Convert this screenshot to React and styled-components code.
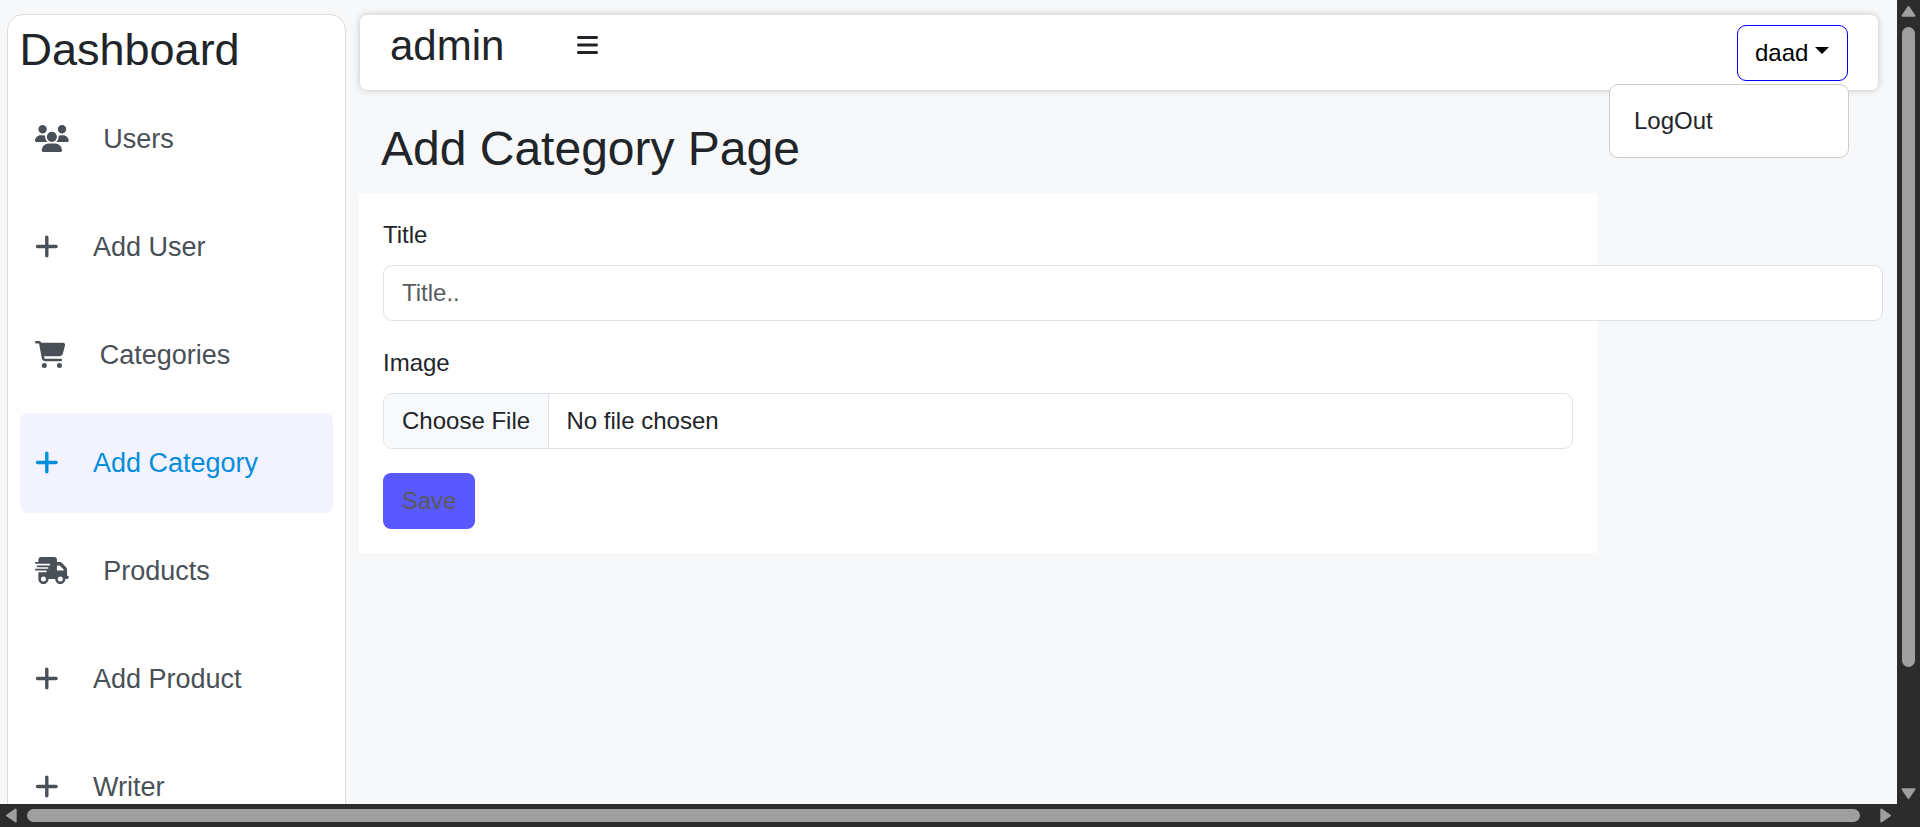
import React from "react";
import styled, { createGlobalStyle } from "styled-components";
import { FaUsers, FaPlus, FaCartShopping, FaTruckFast, FaBars } from "react-icons/fa6";

const GlobalStyle = createGlobalStyle`
  *, *::before, *::after { box-sizing: border-box; }
  body {
    margin: 0;
    overflow: hidden;
    font-family: "Liberation Sans", Arial, sans-serif;
    font-size: 24px;
    line-height: 36px;
    color: #212529;
    background: #f7f8fa;
  }
`;

const Window = styled.div`
  display: grid;
  grid-template-columns: 1897px 23px;
  grid-template-rows: 804px 23px;
  width: 1920px;
  height: 827px;
  overflow: hidden;
`;

const Viewport = styled.div`
  display: flex;
  align-items: flex-start;
  gap: 13px;
  padding: 14px 0 0 7px;
  overflow: hidden;
  background: #f7f8fa;
`;

const Sidebar = styled.aside`
  flex: none;
  width: 339px;
  height: 1170px;
  padding: 0 12px;
  background: #fff;
  border: 1px solid #ddd;
  border-radius: 16px;
`;

const Brand = styled.h1`
  margin: 8px 0 12px -0.5px;
  height: 54px;
  font-size: 45px;
  font-weight: 400;
  line-height: 54px;
`;

const Nav = styled.nav`
  display: flex;
  flex-direction: column;
  gap: 8px;
`;

const NavItem = styled.a`
  display: flex;
  align-items: center;
  gap: 34.4px;
  height: 100px;
  padding: 0 15px 1px;
  border-radius: 8px;
  font-size: 27px;
  color: ${(p) => (p.$active ? "#038edc" : "#495057")};
  background: ${(p) => (p.$active ? "#f3f3ff" : "transparent")};

  svg {
    flex: none;
    width: ${(p) => p.$iconWidth}px;
    height: 27px;
  }
`;

const Main = styled.main`
  flex: 1;
  min-width: 0;
  display: flex;
  flex-direction: column;
  align-items: flex-start;
`;

const TopBar = styled.header`
  display: flex;
  align-items: flex-start;
  width: 1518px;
  height: 75px;
  margin: 1px 0 0 1px;
  padding: 10px 30px 0;
  background: #fff;
  border-radius: 7px;
  box-shadow: 0 0 7.5px rgba(0, 0, 0, 0.22);
`;

const Role = styled.h2`
  margin: -4px 0 0;
  font-size: 42px;
  font-weight: 400;
  line-height: 50px;
`;

const MenuToggle = styled.span`
  display: flex;
  margin: 8px 0 0 73px;

  svg {
    width: 21px;
    height: 24px;
  }
`;

const Dropdown = styled.div`
  position: relative;
  margin-left: auto;
`;

const DropdownToggle = styled.button`
  display: flex;
  align-items: center;
  gap: 7px;
  width: 111px;
  height: 56px;
  padding: 0 18px 0 17px;
  border: 1px solid #00f;
  border-radius: 9px;
  background: #fff;
  color: #000;
  font: inherit;

  &::after {
    content: "";
    margin-top: -5px;
    border-top: 7px solid #000;
    border-left: 7px solid transparent;
    border-right: 7px solid transparent;
  }
`;

const DropdownMenu = styled.div`
  position: absolute;
  top: 59px;
  right: -1px;
  width: 240px;
  height: 74px;
  padding: 18px 24px;
  background: #fff;
  border: 1px solid #ccc;
  border-radius: 9px;
`;

const PageTitle = styled.h1`
  margin: 30px 0 15px 22px;
  font-size: 48px;
  font-weight: 400;
  line-height: 58px;
`;

const FormPanel = styled.form`
  display: flex;
  flex-direction: column;
  align-items: flex-start;
  width: 1238px;
  height: 360px;
  padding: 24px;
  background: #fff;
`;

const Label = styled.label`
  margin-bottom: 12px;
`;

const TextInput = styled.input`
  flex: none;
  width: 1500px;
  height: 56px;
  margin-bottom: 24px;
  padding: 0 18px;
  border: 1px solid #dee2e6;
  border-radius: 9px;
  background: #fff;
  font: inherit;

  &::placeholder {
    color: #595c5f;
    opacity: 1;
  }
`;

const FileField = styled.div`
  display: flex;
  flex: none;
  width: 1190px;
  height: 56px;
  margin-bottom: 24px;
  border: 1px solid #dee2e6;
  border-radius: 9px;
  line-height: 54px;
  overflow: hidden;
`;

const FileButton = styled.span`
  width: 165px;
  padding-left: 18px;
  border-right: 1px solid #dee2e6;
  background: #f8f9fa;
`;

const FileName = styled.span`
  padding-left: 17.5px;
`;

const SaveButton = styled.button`
  width: 92px;
  height: 56px;
  padding: 0;
  border: 0;
  border-radius: 8px;
  background: #5959ff;
  color: #595959;
  font: inherit;
`;

const ScrollBar = styled.div`
  display: flex;
  flex-direction: ${(p) => (p.$vertical ? "column" : "row")};
  align-items: center;
  background: #2c2c2c;
  padding: ${(p) => (p.$vertical ? "6px 0 5px" : "0 6px 0 6px")};

  svg {
    flex: none;
    display: block;
  }
`;

const Thumb = styled.div`
  flex: none;
  width: ${(p) => (p.$vertical ? "13px" : "1833px")};
  height: ${(p) => (p.$vertical ? "640px" : "13px")};
  margin: ${(p) => (p.$vertical ? "10px 0 auto" : "0 auto 0 10px")};
  border-radius: 7px;
  background: #9f9f9f;
`;

const Corner = styled.div`
  background: #2c2c2c;
`;

const Arrow = ({ angle, vertical }) => (
  <svg width={vertical ? 15 : 11} height={vertical ? 11 : 15} viewBox={vertical ? "-7.5 -5.5 15 11" : "-5.5 -7.5 11 15"}>
    <path
      d="M0 -4.5L6 4.2H-6Z"
      transform={`rotate(${angle})`}
      fill="#9f9f9f"
      stroke="#9f9f9f"
      strokeWidth="2"
      strokeLinejoin="round"
    />
  </svg>
);

const links = [
  { label: "Users", icon: FaUsers, iconWidth: 33.75 },
  { label: "Add User", icon: FaPlus, iconWidth: 23.6 },
  { label: "Categories", icon: FaCartShopping, iconWidth: 30.4 },
  { label: "Add Category", icon: FaPlus, iconWidth: 23.6, active: true },
  { label: "Products", icon: FaTruckFast, iconWidth: 33.75 },
  { label: "Add Product", icon: FaPlus, iconWidth: 23.6 },
  { label: "Writer", icon: FaPlus, iconWidth: 23.6 },
];

export default function App() {
  return (
    <>
      <GlobalStyle />
      <Window>
        <Viewport>
          <Sidebar>
            <Brand>Dashboard</Brand>
            <Nav>
              {links.map(({ label, icon: Icon, iconWidth, active }) => (
                <NavItem key={label} $active={active} $iconWidth={iconWidth}>
                  <Icon />
                  {label}
                </NavItem>
              ))}
            </Nav>
          </Sidebar>
          <Main>
            <TopBar>
              <Role>admin</Role>
              <MenuToggle>
                <FaBars />
              </MenuToggle>
              <Dropdown>
                <DropdownToggle>daad</DropdownToggle>
                <DropdownMenu>LogOut</DropdownMenu>
              </Dropdown>
            </TopBar>
            <PageTitle>Add Category Page</PageTitle>
            <FormPanel>
              <Label>Title</Label>
              <TextInput placeholder="Title.." />
              <Label>Image</Label>
              <FileField>
                <FileButton>Choose File</FileButton>
                <FileName>No file chosen</FileName>
              </FileField>
              <SaveButton type="button" disabled>
                Save
              </SaveButton>
            </FormPanel>
          </Main>
        </Viewport>
        <ScrollBar $vertical>
          <Arrow vertical angle={0} />
          <Thumb $vertical />
          <Arrow vertical angle={180} />
        </ScrollBar>
        <ScrollBar>
          <Arrow angle={-90} />
          <Thumb />
          <Arrow angle={90} />
        </ScrollBar>
        <Corner />
      </Window>
    </>
  );
}
